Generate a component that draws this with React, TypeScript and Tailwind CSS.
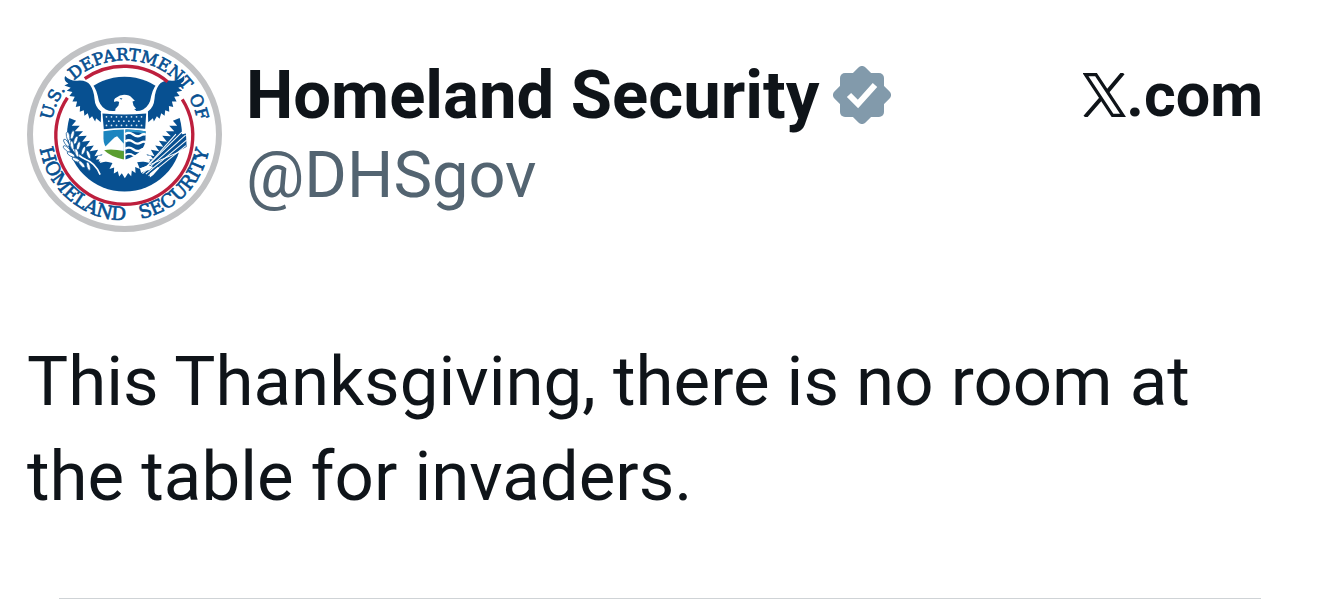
import { ReactNode } from "react";

const BLUE = "#075091";

// star rows in the top band of the shield
const STAR_ROWS = [
  { y: 260, xs: [260, 275, 290, 305, 320, 335, 350, 365] },
  { y: 273, xs: [267, 282, 297, 312, 327, 342, 357] },
  { y: 286, xs: [260, 275, 290, 305, 320, 335, 350, 365] },
];

// x, y and rotation of each leaf on the olive branch
const LEAVES = [
  [145, 318, 80], [158, 314, 105], [140, 338, 55], [168, 330, 110], [141, 356, 40],
  [176, 347, 105], [154, 373, 30], [191, 361, 110], [169, 389, 25], [206, 373, 70],
  [186, 402, 50], [206, 408, 75], [157, 345, 80], [171, 368, 75],
];

function Wing() {
  return (
    <g>
      <path
        fill="#fff"
        d="M170 120 L205 150 Q228 168 234 198 Q238 228 258 238 Q274 246 296 240 L316 250 L316 392 L236 394 L248 372 L224 378 L235 359 L210 363 L222 346 L198 350 L211 332 L187 335 L201 317 L175 318 L190 303 L165 303 L180 287 L156 287 L169 272 L147 263 L138 275 L128 272 L124 190 Z"
      />
      <path
        fill={BLUE}
        d="M136 138 Q150 153 172 152 Q200 149 211 165 Q222 181 224 205 Q226 232 244 244 L243 276 L229 264 L226 274 L217 258 L209 266 L204 249 L194 257 L192 240 L180 245 L181 228 L168 231 L172 214 L158 214 L165 200 L149 198 L158 186 L141 182 L153 173 L134 166 L146 160 Q130 152 136 138 Z"
      />
    </g>
  );
}

function Seal() {
  return (
    <svg viewBox="22 21 584 584" className="size-[195px] shrink-0" role="img" aria-label="Homeland Security seal">
      <defs>
        <path id="arc-top" d="M92 313 A222 222 0 0 1 536 313" />
        <path id="arc-bottom" d="M57 313 A257 257 0 0 0 571 313" />
      </defs>
      <circle cx="314" cy="313" r="283" fill="#fff" stroke="#c1c2c4" strokeWidth="18" />
      <circle cx="314" cy="312" r="172" fill={BLUE} />
      <Wing />
      <g transform="translate(628 0) scale(-1 1)">
        <Wing />
      </g>
      {/* ring, open where the wing tips cross it */}
      <path
        d="M195 146 A205 205 0 0 1 443 155 M143 203 A205 205 0 1 0 487 208"
        fill="none"
        stroke="#bd1f3d"
        strokeWidth="10"
      />

      {/* neck and head */}
      <path
        fill="#fff"
        d="M274 250 L289 239 L285 238 L296 226 L298 216 Q292 211 283 216 Q281 205 290 202 Q299 194 313 194 Q330 194 336 203 L345 212 L338 214 L341 226 L349 236 L343 237 L358 250 Z"
      />
      <path d="M299 204 l9 1 l-4 4 Z" fill={BLUE} />

      {/* tail */}
      <path
        fill="#fff"
        d="M236 376 L392 376 L400 387 L385 388 L390 398 L370 394 L352 396 L360 416 L346 410 L347 428 L336 421 L334 438 L325 428 L315 444 L306 429 L298 439 L294 423 L282 430 L283 412 L269 416 L278 398 L258 394 L240 398 L244 388 L228 388 Z"
      />

      {/* shield */}
      <path d="M243 246 Q314 250 384 246 L382 298 Q386 365 314 394 Q242 365 247 298 Z" fill="#fff" />
      <path d="M248 250 Q314 256 379 250 L376 296 Q314 290 252 297 Z" fill={BLUE} />
      {STAR_ROWS.map((row) =>
        row.xs.map((x) => <circle key={`${x}-${row.y}`} cx={x} cy={row.y} r="2.6" fill="#d4e3ef" />)
      )}
      <path d="M251 303 Q280 298 312 298 L312 386 Q251 366 251 325 Z" fill="#1c85bf" />
      <path d="M250 356 L284 322 L292 318 L312 341 L312 362 L252 362 Z" fill="#fff" />
      <path d="M253 360 Q278 355 312 363 L312 388 Q272 379 253 360 Z" fill="#5a9e2f" />
      <path d="M317 298 Q348 298 377 303 L377 325 Q377 368 317 388 Z" fill={BLUE} />
      <path d="M317 298 Q348 298 377 303 L377 313 Q346 302 317 308 Z" fill="#2b93c8" />
      <g fill="none" stroke="#fff" strokeWidth="7">
        <path d="M316 312 Q328 304 340 313 T362 316 T378 314" />
        <path d="M316 334 Q328 326 340 335 T362 338 T378 336" />
        <path d="M316 356 Q328 348 340 357 T362 360 T376 358" />
        <path d="M316 375 Q328 367 340 375 T360 374" strokeWidth="5" />
      </g>

      {/* olive branch */}
      <path d="M146 312 Q150 366 198 388 Q226 398 241 433" fill="none" stroke="#fff" strokeWidth="5" />
      {LEAVES.map(([x, y, r]) => (
        <g key={`${x}-${y}`} transform={`translate(${x} ${y}) rotate(${r})`}>
          <ellipse rx="13" ry="5" fill="#fff" stroke={BLUE} strokeWidth="2" />
        </g>
      ))}

      {/* arrows */}
      <path d="M404 404 L458 318 L498 310 L500 350 Z" fill={BLUE} />
      <g stroke="#fff" strokeWidth="3" fill="none">
        <path d="M364 425 L486 306" />
        <path d="M368 430 L497 315" />
        <path d="M378 432 L500 330" />
        <path d="M386 437 L498 346" />
        <path d="M372 419 L468 312" />
        <path d="M362 416 L494 358" />
      </g>
      <path
        fill="#fff"
        d="M360 414 L386 406 L400 410 L388 420 L378 421 L364 428 Z M390 430 L414 410 L418 414 L400 434 L390 442 Z"
      />

      <g
        fill={BLUE}
        stroke={BLUE}
        strokeWidth="2"
        textAnchor="middle"
        fontFamily="'DejaVu Serif', serif"
      >
        <g fontSize="50">
          <text><textPath href="#arc-top" startOffset="94">U.S.</textPath></text>
          <text><textPath href="#arc-top" startOffset="370">DEPARTMENT</textPath></text>
          <text><textPath href="#arc-top" startOffset="618">OF</textPath></text>
        </g>
        <g fontSize="56">
          <text><textPath href="#arc-bottom" startOffset="225">HOMELAND</textPath></text>
          <text><textPath href="#arc-bottom" startOffset="606">SECURITY</textPath></text>
        </g>
      </g>
    </svg>
  );
}

function VerifiedBadge() {
  return (
    <svg viewBox="0 0 58 58" className="size-[58px] shrink-0" role="img" aria-label="Verified government account">
      <g fill="#829aab">
        <rect x="7" y="7" width="44" height="44" rx="5" />
        <rect x="7" y="7" width="44" height="44" rx="5" transform="rotate(45 29 29)" />
      </g>
      <path d="M16 29 L25 38 L42 19" fill="none" stroke="#fff" strokeWidth="6" />
    </svg>
  );
}

function XLogo() {
  return (
    <svg viewBox="0 0 43 44" className="h-11 w-[43px] shrink-0" role="img" aria-label="X">
      <g fill="none" stroke="#0f1419">
        <path d="M2.5 1.7 H13 L40 42.3 H29.5 Z" strokeWidth="3.2" />
        <path d="M40 0 L24.5 18.5 M18.5 25 L2 44" strokeWidth="4" />
      </g>
    </svg>
  );
}

function PostText({ children }: { children: ReactNode }) {
  return (
    <p className="mt-[102px] text-[69px] leading-[95px] text-[#0f1419]">{children}</p>
  );
}

function App() {
  return (
    <main className="bg-white px-[27px] pt-[37px] font-['Roboto',sans-serif]">
      <article>
        <header className="flex items-start">
          <Seal />
          <div className="ml-6 mt-[18px]">
            <div className="flex items-center gap-[14px]">
              <h1 className="text-[67px] leading-[80px] font-bold text-[#0f1419]">Homeland Security</h1>
              <VerifiedBadge />
            </div>
            <p className="text-[65px] leading-[80px] text-[#536471]">@DHSgov</p>
          </div>
          <a href="#" className="ml-auto mr-[30px] mt-[18px] flex items-center text-[61px] leading-[80px] font-bold text-[#0f1419]">
            <XLogo />
            .com
          </a>
        </header>
        <PostText>This Thanksgiving, there is no room at the table for invaders.</PostText>
      </article>
      <hr className="mx-8 mt-[74px] border-[#cfd3d6]" />
    </main>
  );
}

export default App;
